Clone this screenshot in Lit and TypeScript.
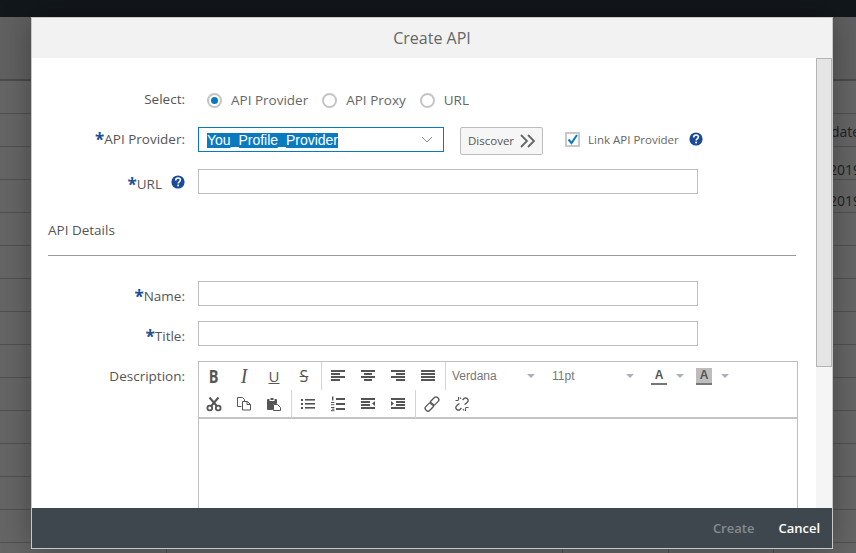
import { LitElement, html, css, svg } from "lit";
import { customElement } from "lit/decorators.js";

const help = html`<svg class="help" viewBox="0 0 14 14" width="14" height="14"><circle cx="7" cy="7" r="6.6" fill="#1a4b9b"/><path d="M4.7 5.4c0-1.5 1-2.4 2.4-2.4s2.3.8 2.3 2.1c0 1.9-2.2 1.8-2.2 3.5" fill="none" stroke="#fff" stroke-width="1.6"/><rect x="6.3" y="9.6" width="1.7" height="1.7" fill="#fff"/></svg>`;

const ico = (body: unknown) => html`<svg class="ico" viewBox="0 0 16 16" width="16" height="16" fill="none" stroke="#555" stroke-width="1">${body}</svg>`;
const lines = (rows: [number, number][]) => ico(rows.map(([x, w], i) => svg`<rect x="${x}" y="${2 + i * 3}" width="${w}" height="2" fill="#555" stroke="none"/>`));

const left = lines([[1, 14], [1, 9], [1, 14], [1, 9]]);
const center = lines([[1, 14], [4, 8], [1, 14], [4, 8]]);
const right = lines([[1, 14], [6, 9], [1, 14], [6, 9]]);
const justify = lines([[1, 14], [1, 14], [1, 14], [1, 14]]);

const scissors = ico(svg`<circle cx="3.800" cy="12" r="2.400" stroke-width="1.800"/><circle cx="12.200" cy="12" r="2.400" stroke-width="1.800"/><path d="M5.200 10 12.500 1.500M10.800 10 3.500 1.500" stroke-width="2"/>`);
const copy = ico(svg`<path d="M1.500 1.500h5l2 2v3M1.500 1.500v9h4" /><path d="M6.500 5.500h5l3 3v5.500h-8z" fill="#fff"/><path d="M11 5.500v3h3.500"/>`);
const paste = ico(svg`<path d="M1.500 3.500h9v4h-4v6h-5z" fill="#555"/><rect x="4" y="1.500" width="4" height="3" fill="#555" stroke="#fff"/><path d="M7.500 8.500h4l3 3v3h-7z" fill="#fff"/>`);
const bullets = ico(svg`<g fill="#555" stroke="none"><rect x="1" y="3" width="2" height="2"/><rect x="1" y="7" width="2" height="2"/><rect x="1" y="11" width="2" height="2"/><rect x="5" y="3" width="10" height="1.600"/><rect x="5" y="7" width="10" height="1.600"/><rect x="5" y="11" width="10" height="1.600"/></g>`);
const numbered = ico(svg`<g fill="#555" stroke="none"><rect x="6" y="2" width="9" height="2"/><rect x="6" y="7" width="9" height="2"/><rect x="6" y="12" width="9" height="2"/><rect x="2" y="0.500" width="1.400" height="4"/><rect x="1" y="6" width="3.400" height="1"/><rect x="1" y="8.200" width="3.400" height="1"/><rect x="1" y="11" width="3.400" height="1"/><rect x="2" y="12.600" width="2.400" height="1"/><rect x="1" y="14.200" width="3.400" height="1"/></g>`);
const outdent = ico(svg`<g fill="#555" stroke="none"><rect x="1" y="2" width="14" height="2"/><rect x="1" y="5" width="9" height="2"/><rect x="1" y="8" width="9" height="2"/><rect x="1" y="11" width="14" height="2"/><path d="M15 5v5l-3-2.500z"/></g>`);
const indent = ico(svg`<g fill="#555" stroke="none"><rect x="1" y="2" width="14" height="2"/><rect x="6" y="5" width="9" height="2"/><rect x="6" y="8" width="9" height="2"/><rect x="1" y="11" width="14" height="2"/><path d="M1 5v5l3-2.500z"/></g>`);
const link = ico(svg`<g stroke-width="1.300"><rect x="8" y="0.600" width="5.400" height="9" rx="2.200" transform="rotate(45 10.700 5.100)"/><rect x="2.600" y="6.400" width="5.400" height="9" rx="2.200" transform="rotate(45 5.300 10.900)"/></g>`);
const unlink = ico(svg`<g stroke-width="1.300"><path d="M8.600 4 10 2.500a2.200 2.200 0 0 1 3.200 0l.3.300a2.200 2.200 0 0 1 0 3.200L12 7.500l-1.500 1"/><path d="M7.400 12 6 13.500a2.200 2.200 0 0 1-3.200 0l-.3-.3a2.200 2.200 0 0 1 0-3.200L4 8.500l1.500-1"/><path d="M1.500 4.500h3M4.500 1v3M11.500 12v3M11.500 11.500h3M7 3 6 1.500M9 13l1 1.500" stroke-width="1.100"/></g>`);

const caret = html`<span class="caret"></span>`;

@customElement("app-root")
export class AppRoot extends LitElement {
  static styles = css`
    :host { display: block; width: 856px; height: 553px; position: relative; overflow: hidden; background: #656565; font-family: "Open Sans", "Noto Sans", sans-serif; color: #555; }
    .top { height: 17px; background: #12171c; }
    .head-band { height: 62px; display: flex; align-items: center; color: #2c2c2c; font-size: 14px; background: #606060; border-bottom: 2px solid #4b4b4b; }
    .head-band span { margin-left: -5px; margin-top: 20px; }
    .row { height: 32px; border-bottom: 1px solid #505050; position: relative; font-size: 14px; color: #222; }
    .cell { position: absolute; left: 829px; }
    .c1 { left: 831px; top: 8px; }
    .c2 { top: 13px; }
    .c3 { top: 11px; }
    .cols { position: absolute; inset: auto 0 0 0; height: 6px; }
    .vl { position: absolute; top: 0; bottom: 0; width: 1px; background: #505050; }
    .modal { position: absolute; left: 31px; top: 17px; width: 802px; height: 532px; box-sizing: border-box; border: 1px solid #c8c8c8; display: flex; flex-direction: column; background: #fff; box-shadow: 0 0 28px rgba(0,0,0,.32); }
    header { height: 40px; flex: none; background: #f2f2f2; display: flex; align-items: center; justify-content: center; font-size: 16px; color: #666; }
    .main { flex: 1; min-height: 0; display: flex; }
    .content { flex: 1; min-width: 0; overflow: hidden; padding: 29px 0 0 16px; }
    .track { width: 16px; flex: none; background: #f5f5f5; }
    .thumb { height: 309px; box-sizing: border-box; background: #e5e5e5; border: 1px solid #b4b4b4; }
    .f { display: grid; grid-template-columns: 137px auto; column-gap: 13px; align-items: start; }
    .lab { text-align: right; font-size: 13.5px; line-height: 25px; height: 25px; box-sizing: border-box; color: #555; display: flex; justify-content: flex-end; align-items: center; }
    .low { padding-top: 6px; }
    .req { color: #1a4f9a; font-weight: 700; font-size: 17px; line-height: 20px; margin-top: 1px; }
    .radios { display: flex; align-items: center; height: 26px; font-size: 13.5px; color: #666; padding-left: 9px; }
    .radio { width: 15px; height: 15px; box-sizing: border-box; border: 2px solid #c4c4c4; border-radius: 50%; margin-right: 9px; display: flex; align-items: center; justify-content: center; }
    .radio.on::after { content: ""; width: 7px; height: 7px; border-radius: 50%; background: #0a7ac0; }
    .opt { display: flex; align-items: center; margin-right: 14px; }
    .input { width: 500px; height: 25px; box-sizing: border-box; border: 1px solid #bfbfbf; background: #fff; }
    .m14 { margin-top: 14px; }
    .m15 { margin-top: 15px; }
    .controls { display: flex; align-items: flex-start; }
    .select { width: 246px; height: 25px; box-sizing: border-box; border: 1px solid #0a7ac0; display: flex; align-items: center; padding: 1px 0 0 8px; font-family: "Liberation Sans", sans-serif; font-size: 14px; position: relative; }
    .sel { background: #0a7ac0; color: #fff; line-height: 15px; }
    .chev { position: absolute; right: 10px; top: 8px; }
    .btn { margin-left: 16px; width: 83px; height: 28px; box-sizing: border-box; border: 1px solid #bdbdbd; border-radius: 2px; background: #f6f6f6; display: flex; align-items: center; padding: 0 0 2px 7px; gap: 6px; font-size: 11.5px; color: #555; }
    .btn svg { margin-top: 2px; }
    .check { margin: 5px 8px 0 22px; width: 15px; height: 15px; box-sizing: border-box; border: 2px solid #c8c8c8; background: #fff; position: relative; }
    .check svg { position: absolute; left: 0; top: 0; }
    .linklab { font-size: 11.5px; line-height: 25px; color: #666; }
    .help { flex: none; display: block; }
    .h1 { margin: 5px 0 0 10px; }
    .h2 { margin: 0 0 6px 9px; }
    .sect { margin-top: 26px; font-size: 13.5px; line-height: 20px; color: #555; }
    hr { border: 0; height: 1px; background: #999; width: 748px; margin: 15px 0 25px; }
    .editor { width: 600px; height: 300px; box-sizing: border-box; border: 1px solid #bfbfbf; }
    .tb { height: 57px; box-sizing: border-box; border-bottom: 2px solid #c4c4c4; display: flex; flex-direction: column; }
    .tr { height: 28px; display: flex; align-items: stretch; flex: none; }
    .g { display: flex; align-items: center; border-right: 1px solid #d4d4d4; padding-right: 2px; margin-right: 1px; }
    .g.last { border: 0; }
    .b { width: 30px; display: flex; align-items: center; justify-content: center; height: 28px; color: #555; font-family: "Open Sans", sans-serif; }
    .bold { font-weight: 700; font-size: 17px; }
    .bold span { display: block; transform: scaleX(.85); }
    .ital { font-style: italic; font-family: "Liberation Serif", serif; font-size: 20px; }
    .und { text-decoration: underline; font-size: 15px; }
    .str { text-decoration: line-through; font-size: 16px; }
    .pick { font-size: 12px; color: #777; font-family: "Liberation Sans", sans-serif; display: flex; align-items: center; justify-content: space-between; }
    .p1 { width: 83px; margin-left: 5px; margin-right: 17px; }
    .p2 { width: 82px; margin-right: 17px; }
    .caret { width: 0; height: 0; border: 4px solid transparent; border-top: 4px solid #a9b2b9; border-bottom: 0; display: block; }
    .color { display: flex; align-items: center; }
    .a { width: 16px; height: 15px; font-family: "Liberation Sans", sans-serif; font-weight: 700; font-size: 12px; color: #555; border-bottom: 2px solid #777; text-align: center; line-height: 15px; margin-right: 9px; }
    .a.hl { background: #bdbdbd; margin-left: 12px; }
    footer { height: 40px; flex: none; background: #3f474e; display: flex; align-items: center; justify-content: flex-end; padding-right: 12px; gap: 24px; font-size: 13px; font-weight: 600; }
    .off { color: #858b91; }
    .on { color: #fff; }
  `;

  render() {
    return html`
      <div class="top"></div>
      <div class="head-band"><span>)</span></div>
      <div class="row"></div>
      <div class="row"><span class="cell c1">date</span></div>
      <div class="row"><span class="cell c2">2019</span></div>
      <div class="row"><span class="cell c3">2019</span></div>
      ${Array.from({ length: 10 }, () => html`<div class="row"></div>`)}
      <div class="cols">
        ${[166, 562, 668, 773].map((x) => html`<i class="vl" style="left:${x}px"></i>`)}
      </div>
      <div class="modal">
        <header>Create API</header>
        <div class="main">
          <div class="content">
            <div class="f">
              <div class="lab">Select:</div>
              <div class="radios">
                <label class="opt"><span class="radio on"></span>API Provider</label>
                <label class="opt"><span class="radio"></span>API Proxy</label>
                <label class="opt"><span class="radio"></span>URL</label>
              </div>
            </div>
            <div class="f m14">
              <div class="lab"><span class="req">*</span>API Provider:</div>
              <div class="controls">
                <div class="select">
                  <span class="sel">You_Profile_Provider</span>
                  <svg class="chev" width="12" height="8" viewBox="0 0 12 8" fill="none" stroke="#8d8d8d"><path d="m1 1 5 5 5-5"/></svg>
                </div>
                <div class="btn">Discover
                  <svg width="16" height="14" viewBox="0 0 16 14" fill="none" stroke="#666" stroke-width="1.800"><path d="m1 1 6 6-6 6M8 1l6 6-6 6"/></svg>
                </div>
                <div class="check"><svg width="11" height="11" viewBox="0 0 11 11" fill="none" stroke="#0a7ac0" stroke-width="2"><path d="m1.500 5.500 3 3.500L10 1"/></svg></div>
                <span class="linklab">Link API Provider</span>
                <span class="h1">${help}</span>
              </div>
            </div>
            <div class="f m14">
              <div class="lab low"><span class="req">*</span>URL<span class="h2">${help}</span></div>
              <div class="input"></div>
            </div>
            <div class="sect">API Details</div>
            <hr />
            <div class="f">
              <div class="lab low"><span class="req">*</span>Name:</div>
              <div class="input"></div>
            </div>
            <div class="f m15">
              <div class="lab low"><span class="req">*</span>Title:</div>
              <div class="input"></div>
            </div>
            <div class="f m15">
              <div class="lab low">Description:</div>
              <div class="editor">
                <div class="tb">
                  <div class="tr">
                    <div class="g"><span class="b bold"><span>B</span></span><span class="b ital">I</span><span class="b und">U</span><span class="b str">S</span></div>
                    <div class="g"><span class="b">${left}</span><span class="b">${center}</span><span class="b">${right}</span><span class="b">${justify}</span></div>
                    <div class="pick p1">Verdana ${caret}</div>
                    <div class="pick p2">11pt ${caret}</div>
                    <div class="color"><span class="a">A</span>${caret}<span class="a hl">A</span>${caret}</div>
                  </div>
                  <div class="tr">
                    <div class="g"><span class="b">${scissors}</span><span class="b">${copy}</span><span class="b">${paste}</span></div>
                    <div class="g"><span class="b">${bullets}</span><span class="b">${numbered}</span><span class="b">${outdent}</span><span class="b">${indent}</span></div>
                    <div class="g last"><span class="b">${link}</span><span class="b">${unlink}</span></div>
                  </div>
                </div>
              </div>
            </div>
          </div>
          <div class="track"><div class="thumb"></div></div>
        </div>
        <footer><span class="off">Create</span><span class="on">Cancel</span></footer>
      </div>
    `;
  }
}
